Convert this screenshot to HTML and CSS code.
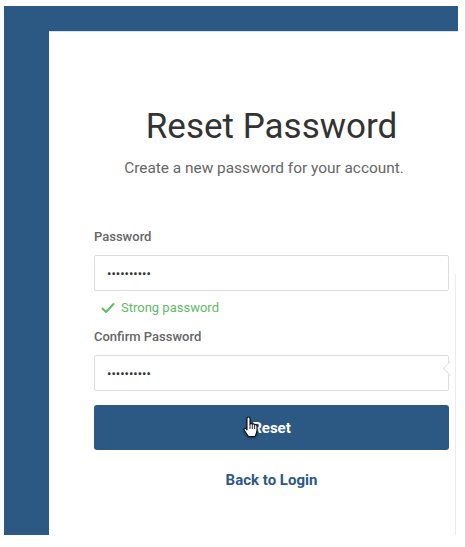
FILE: index.html
```html
<!DOCTYPE html>
<html lang="en">
<head>
  <meta charset="UTF-8">
  <title>Reset Password</title>
  <link rel="stylesheet" href="styles.css">
</head>
<body>
  <div class="frame">
    <div class="card">
      <div class="content">
        <h1>Reset Password</h1>
        <p class="subtitle">Create a new password for your account.</p>

        <label class="field-label" for="password">Password</label>
        <input type="password" id="password" value="secret1234">
        <div class="hint">
          <svg class="check" width="14" height="12" viewBox="0 0 14 12">
            <path d="M1.5 6.5 L5 10 L12.5 2" fill="none" stroke="#62ba66" stroke-width="2" stroke-linecap="round" stroke-linejoin="round"/>
          </svg>
          Strong password
        </div>

        <label class="field-label" for="confirm">Confirm Password</label>
        <div class="confirm-wrap">
          <input type="password" id="confirm" value="secret1234">
          <div class="popover-edge"></div>
        </div>

        <div class="button-wrap">
          <button class="reset-btn">Reset</button>
          <svg class="cursor" width="18" height="22" viewBox="0 0 18 22">
            <path d="M5.5 1 C6.3 1 7 1.7 7 2.5 V8 C7.4 7.3 9 7.4 9.3 8.3 C9.8 7.6 11.3 7.8 11.6 8.8 C12.2 8.2 13.8 8.6 14 9.8 V14 C14 17 12.6 19 12 20.5 H5.6 C4.6 19 2.2 16 1.3 14.3 C0.6 12.9 1.8 11.8 2.9 12.6 L4 13.8 V2.5 C4 1.7 4.7 1 5.5 1 Z" fill="#fff" stroke="#111" stroke-width="1.1" stroke-linejoin="round"/>
            <path d="M7 8 V13 M9.3 8.3 V13 M11.6 8.8 V13" fill="none" stroke="#111" stroke-width="0.9"/>
          </svg>
        </div>

        <a class="back-link" href="#">Back to Login</a>
      </div>
      <div class="popover-line"></div>
    </div>
  </div>
</body>
</html>
```

FILE: styles.css
```css
body {
  margin: 0;
  background-color: #fff;
  font-family: Roboto, 'Liberation Sans', sans-serif;
  color: #333;
}
.frame {
  margin: 6px 0 0 4px;
  width: 454px;
  height: 529px;
  padding: 25px 0 0 45px;
  box-sizing: border-box;
  background-color: #2c5984;
}
.card {
  position: relative;
  height: 100%;
  background-color: #fff;
  padding: 74px 9px 0 45px;
  box-sizing: border-box;
  border-top: 1px solid #cfe3f5;
}
.content {
  display: flex;
  flex-direction: column;
  width: 355px;
}
h1 {
  margin: -1px 0 0;
  font-size: 35px;
  font-weight: 400;
  line-height: 44px;
  text-align: center;
  color: #333;
}
.subtitle {
  margin: 9px 0 0;
  padding-right: 15px;
  font-size: 15.4px;
  line-height: 20px;
  text-align: center;
  color: #666;
}
.field-label {
  font-size: 13px;
  font-weight: 500;
  line-height: 18px;
  color: #666;
  margin-top: 50px;
}
.hint + .field-label {
  margin-top: 11px;
}
input {
  margin-top: 9px;
  height: 36px;
  padding: 0 12px;
  border: 1px solid #ddd;
  border-radius: 2px;
  font-family: Roboto, sans-serif;
  font-size: 13px;
  color: #333;
  box-sizing: border-box;
  width: 100%;
  outline: none;
}
.hint {
  display: flex;
  align-items: center;
  gap: 6px;
  margin-top: 8px;
  padding-left: 7px;
  font-size: 13px;
  line-height: 18px;
  color: #62ba66;
}
.confirm-wrap {
  position: relative;
}
.popover-edge {
  position: absolute;
  right: -7px;
  top: 17px;
  width: 10px;
  height: 10px;
  background-color: #fff;
  border-left: 1px solid #e4e4e4;
  border-bottom: 1px solid #e4e4e4;
  transform: rotate(45deg);
}
.popover-line {
  position: absolute;
  left: 406px;
  top: 242px;
  bottom: 0;
  border-left: 1px solid #ececec;
}
.button-wrap {
  position: relative;
  margin-top: 14px;
}
.reset-btn {
  width: 100%;
  height: 45px;
  border: none;
  border-radius: 3px;
  background-color: #2c5984;
  color: #fff;
  font-family: Roboto, sans-serif;
  font-size: 15px;
  font-weight: 700;
  cursor: pointer;
}
.cursor {
  position: absolute;
  left: 149px;
  top: 11px;
  filter: drop-shadow(0 1px 1px rgba(0, 0, 0, 0.5));
}
.back-link {
  margin-top: 20px;
  font-size: 15px;
  font-weight: 700;
  line-height: 20px;
  text-align: center;
  color: #2c5984;
  text-decoration: none;
}
```
